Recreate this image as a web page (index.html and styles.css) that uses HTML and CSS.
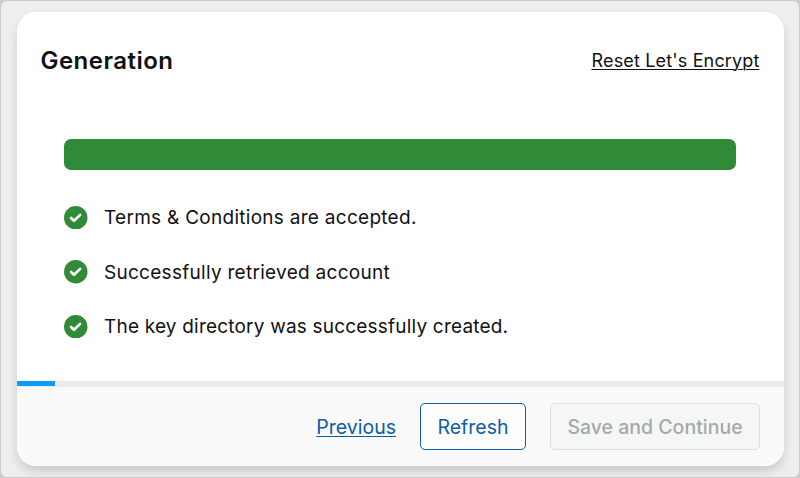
FILE: index.html
```html
<!doctype html>
<html lang="en">
<head>
  <meta charset="utf-8"/>
  <title>Generation</title>
  <meta name="viewport" content="width=device-width, initial-scale=1"/>
  <link rel="stylesheet" href="styles.css">
</head>
<body>

<div class="frame">
  <main class="card">
    <header class="card-head">
      <h1>Generation</h1>
      <a class="reset" href="#">Reset Let's Encrypt</a>
    </header>

    <section class="content">
      <div class="bar"></div>
      <ul class="steps">
        <li>
          <svg class="check" viewBox="0 0 24 24"><circle cx="12" cy="12" r="12"/><path d="M7.2 12.2l3 2.9 6.3-6"/></svg>
          <span>Terms &amp; Conditions are accepted.</span>
        </li>
        <li>
          <svg class="check" viewBox="0 0 24 24"><circle cx="12" cy="12" r="12"/><path d="M7.2 12.2l3 2.9 6.3-6"/></svg>
          <span>Successfully retrieved account</span>
        </li>
        <li>
          <svg class="check" viewBox="0 0 24 24"><circle cx="12" cy="12" r="12"/><path d="M7.2 12.2l3 2.9 6.3-6"/></svg>
          <span class="directory">The key directory was successfully created.</span>
        </li>
      </ul>
    </section>

    <div class="track"><div class="track-fill"></div></div>

    <footer class="actions">
      <a class="previous" href="#">Previous</a>
      <button class="btn refresh" type="button">Refresh</button>
      <button class="btn save" type="button" disabled>Save and Continue</button>
    </footer>
  </main>
</div>

</body>
</html>
```

FILE: styles.css
```css
*{box-sizing:border-box}
body{margin:0;height:478px;background:#cbcbcb;color:#111;font-family:Inter,sans-serif;overflow:hidden}
.frame{height:478px;padding:11px 15px 11px 15.5px;border:1px solid #cbcbcb;border-radius:7px;background:#eee;overflow:hidden}
.card{display:flex;flex-direction:column;height:454px;border-radius:19px;background:#fff;box-shadow:0 6px 10px #00000024;overflow:hidden}

.card-head{display:flex;align-items:center;justify-content:space-between;height:96px;padding:0 24.5px 0 24px}
h1{margin:0;font-size:24px;font-weight:600;letter-spacing:.47px}
.reset{color:#111;font-size:18px;letter-spacing:.15px;text-underline-offset:2px;text-decoration-thickness:1px}

.content{flex:1;padding:31px 48px 0 47.5px}
.bar{height:31px;border-radius:7px;background:#2f8b38}
.steps{margin:20px 0 0;padding:0;list-style:none}
.steps li{display:flex;align-items:center;gap:16.5px;height:54.5px;font-size:19px;letter-spacing:.28px}
.steps .directory{letter-spacing:.2px}
.steps span{padding-top:1px}
.check{width:23.5px;height:23.5px;fill:#2f8b38}
.check path{fill:none;stroke:#fff;stroke-width:2.7;stroke-linecap:round;stroke-linejoin:round}

.track{height:6px;background:#ebebeb}
.track-fill{width:38px;height:5px;background:#0a9bfb}

.actions{display:flex;align-items:center;justify-content:flex-end;gap:24px;height:79px;padding:0 24px;background:#fafafa;font-size:19.5px}
.previous{color:#0b5cab;text-underline-offset:2px;text-decoration-thickness:1px}
.btn{height:47px;padding:0;border:1px solid #0b5cab;border-radius:5px;background:#fdfdfd;color:#0b5cab;font:19.5px Inter,sans-serif}
.refresh{width:106px}
.save{width:210px;border-color:#dcdfdf;background:#f5f7f7;color:#a6a8ab;font-weight:500}
```
